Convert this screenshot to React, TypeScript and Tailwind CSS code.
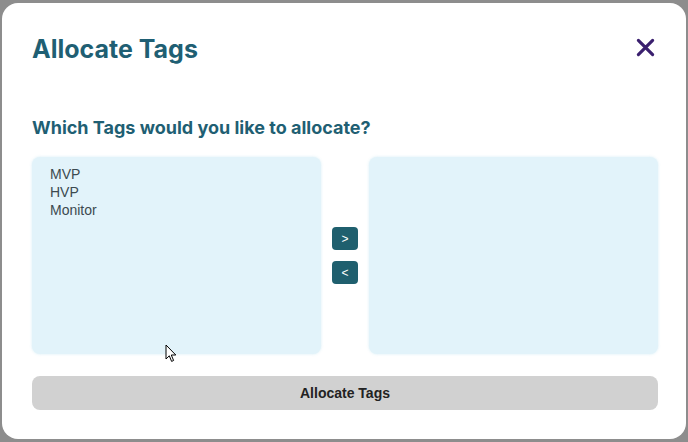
import { useState } from 'react';

const availableTags = ['MVP', 'HVP', 'Monitor'];

function CloseIcon({ className }: { className?: string }) {
  return (
    <svg viewBox="0 0 20 20" className={className} fill="none">
      <path
        d="M2.5 2.5 L17.5 17.5 M17.5 2.5 L2.5 17.5"
        stroke="currentColor"
        strokeWidth="3.3"
        strokeLinecap="round"
      />
    </svg>
  );
}

function PointerCursor({ className }: { className?: string }) {
  return (
    <svg viewBox="0 0 12 19" className={className}>
      <path
        d="M1 1 L1 15 L4.3 11.8 L6.6 17.4 L8.6 16.5 L6.3 11 L10.8 11 Z"
        fill="white"
        stroke="black"
        strokeWidth="1"
        strokeLinejoin="round"
      />
    </svg>
  );
}

function TagList({ tags }: { tags: string[] }) {
  return (
    <ul className="flex-1 rounded-lg bg-[#e2f3fa] px-[18px] py-2 font-['Liberation_Sans',Arial,sans-serif] text-[14px] leading-[18px] text-[#3c4a50] shadow-[0_0_3px_rgba(210,235,245,0.9)]">
      {tags.map((tag) => (
        <li key={tag}>{tag}</li>
      ))}
    </ul>
  );
}

export default function App() {
  const [left] = useState<string[]>(availableTags);
  const [right] = useState<string[]>([]);

  return (
    <div className="h-[442px] w-[688px] bg-[#8d8d8d] px-[2px] pt-[3px] pb-[3px]">
      <div className="relative flex h-full flex-col rounded-2xl bg-white pt-[30px] pr-[28px] pb-[29px] pl-[30px] font-['Inter',sans-serif]">
        <div className="flex items-center justify-between">
          <h1 className="text-[25px] leading-8 font-bold text-[#1f5f73]">
            Allocate Tags
          </h1>
          <button type="button" className="-mt-[3px] mr-[3px] text-[#3a1f6e]">
            <CloseIcon className="h-[19px] w-[19px]" />
          </button>
        </div>

        <h2 className="mt-[51px] text-[18px] leading-6 font-bold text-[#1f5f73]">
          Which Tags would you like to allocate?
        </h2>

        <div className="mt-[17px] flex h-[198px]">
          <TagList tags={left} />
          <div className="flex w-[48px] flex-col items-center justify-center gap-[11px]">
            <button
              type="button"
              className="h-[23px] w-[26px] rounded bg-[#1f5f6e] font-['Liberation_Sans',Arial,sans-serif] text-[12px] text-white"
            >
              &gt;
            </button>
            <button
              type="button"
              className="h-[23px] w-[26px] rounded bg-[#1f5f6e] font-['Liberation_Sans',Arial,sans-serif] text-[12px] text-white"
            >
              &lt;
            </button>
          </div>
          <TagList tags={right} />
        </div>

        <button
          type="button"
          className="mt-[22px] h-[34px] w-full rounded-lg bg-[#d1d1d1] font-['Liberation_Sans',Arial,sans-serif] text-[14px] font-bold text-[#222]"
        >
          Allocate Tags
        </button>

        <PointerCursor className="pointer-events-none absolute top-[341px] left-[163px] h-[19px] w-[12px]" />
      </div>
    </div>
  );
}
